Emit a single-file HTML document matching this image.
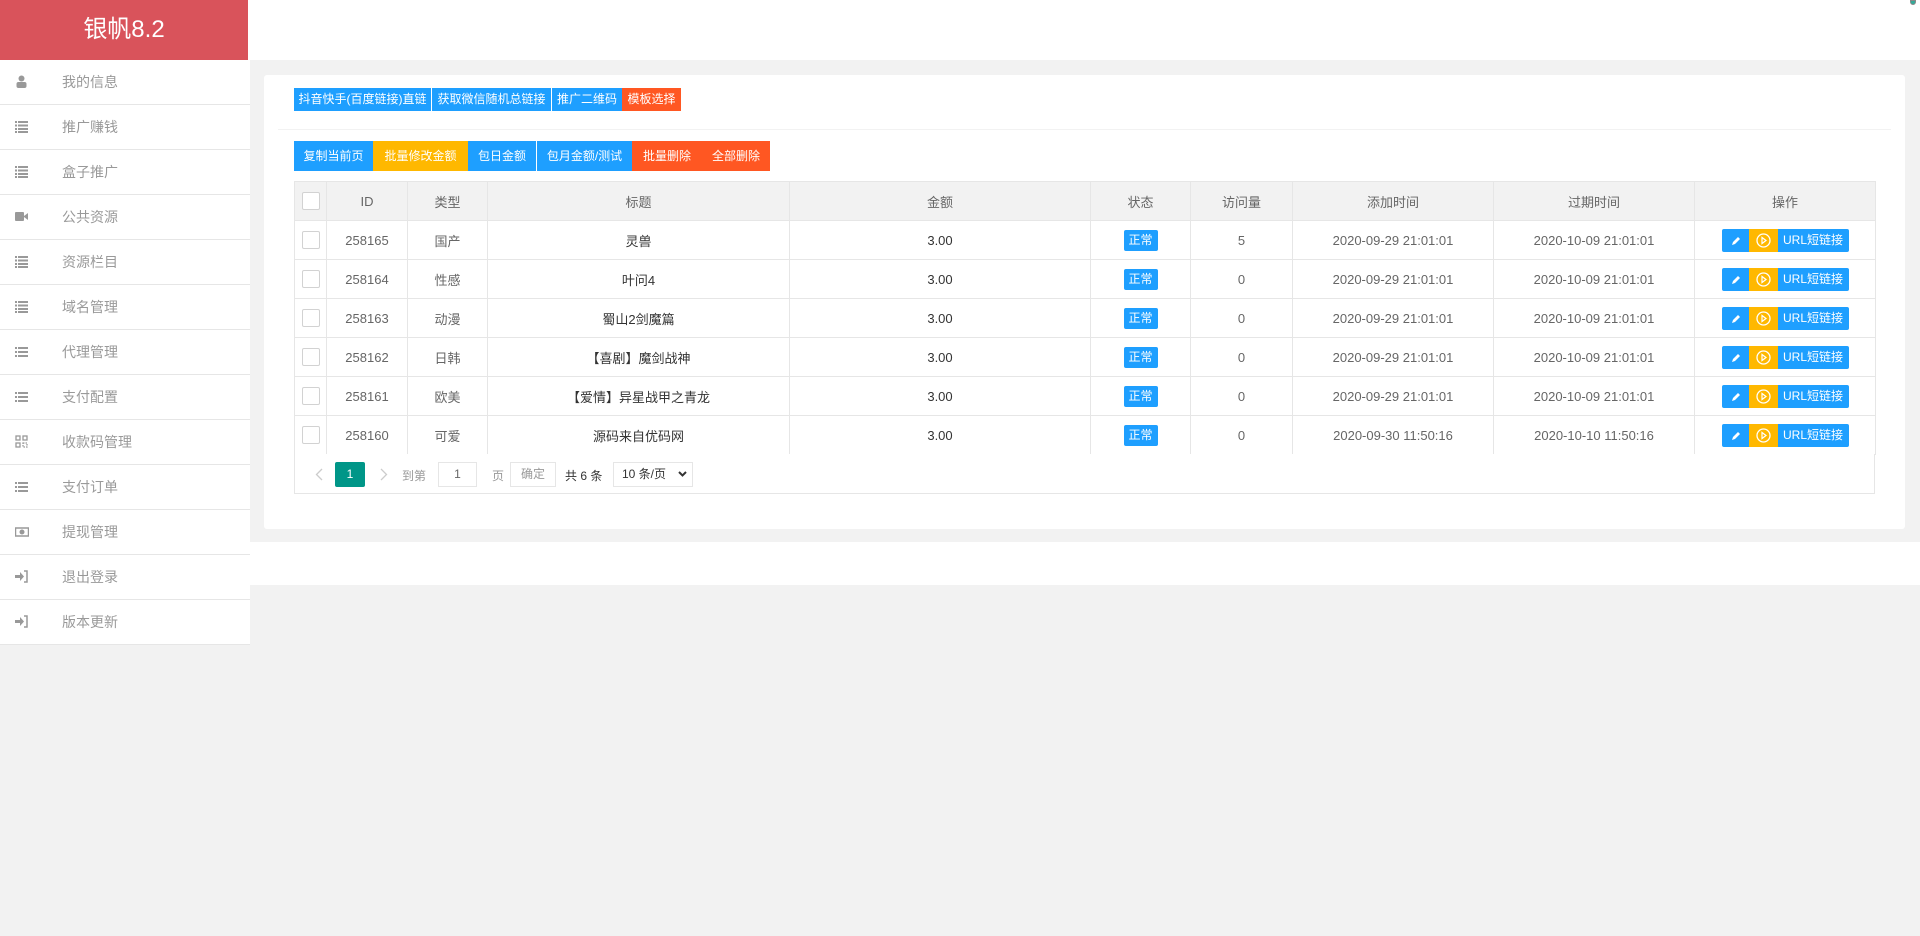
<!DOCTYPE html>
<html><head><meta charset="utf-8"><style>
*{margin:0;padding:0;box-sizing:border-box}
svg{display:block}
body{width:1920px;height:936px;background:#f2f2f2;font-family:"Liberation Sans","Noto Sans CJK SC",sans-serif;position:relative;overflow:hidden;color:#666}
.abs{position:absolute}
#logo{left:0;top:0;width:248px;height:60px;background:#d9535b;color:#fff;font-size:24px;line-height:60px;text-align:center}
#top{left:248px;top:0;width:1672px;height:60px;background:#fff}
#side{left:0;top:60px;width:250px}
.si{height:45px;border-bottom:1px solid #e6e6e6;background:#fff;position:relative;font-size:14px;color:#999;line-height:44px;padding-left:62px}
.si i{position:absolute;left:15px;top:15px;width:14px;height:13px;display:block}
#card{left:264px;top:75px;width:1641px;height:454px;background:#fff;border-radius:3px}
#foot{left:250px;top:542px;width:1670px;height:43px;background:#fff}
.btn{position:absolute;color:#fff;text-align:center;white-space:nowrap}
.r1{top:88px;height:23px;line-height:23px;font-size:12px}
.r2{top:141px;height:30px;line-height:30px;font-size:12px}
.b{background:#1E9FFF}.o{background:#FFB800}.rd{background:#FF5722}
#sep{left:278px;top:129px;width:1613px;height:1px;background:#f2f2f2}
table{position:absolute;left:294px;top:181px;width:1581px;border-collapse:collapse;font-size:13px;table-layout:fixed}
td,th{border:1px solid #e6e6e6;height:39px;text-align:center;font-weight:normal;color:#666;padding:0}
th{background:#f2f2f2}
td.t{color:#333}
.cb{display:inline-block;width:18px;height:18px;border:1px solid #d2d2d2;border-radius:2px;background:#fff;vertical-align:middle}
.st{display:inline-block;background:#1E9FFF;color:#fff;font-size:12px;width:34px;height:21px;line-height:21px;border-radius:2px;vertical-align:middle}
.ops{display:inline-flex;height:23px;vertical-align:middle;border-radius:2px;overflow:hidden}
.ops span{display:block;height:23px;line-height:23px;color:#fff;font-size:12px}
#pg{left:294px;top:454px;width:1581px;height:40px;border:1px solid #e6e6e6;border-top:none;background:#fff;font-size:12px}
</style></head><body>
<div id="logo" class="abs">银帆8.2</div>
<div id="top" class="abs"></div>
<div class="abs" style="left:1910px;top:0;width:6px;height:5px;background:#3a9;border-radius:0 0 3px 3px;border:1px solid #888"></div>
<div id="side" class="abs">
<div class="si"><i><svg width="13" height="13"><circle cx="6.5" cy="3.5" r="3" fill="#999"/><rect x="1.5" y="7" width="10" height="6" rx="2" fill="#999"/></svg></i>我的信息</div>
<div class="si"><i><svg width="13" height="13" fill="#999"><rect x="0" y="1" width="2" height="2"/><rect x="3" y="1" width="10" height="2"/><rect x="0" y="4.5" width="2" height="2"/><rect x="3" y="4.5" width="10" height="2"/><rect x="0" y="8" width="2" height="2"/><rect x="3" y="8" width="10" height="2"/><rect x="0" y="11" width="2" height="2"/><rect x="3" y="11" width="10" height="2"/></svg></i>推广赚钱</div>
<div class="si"><i><svg width="13" height="13" fill="#999"><rect x="0" y="1" width="2" height="2"/><rect x="3" y="1" width="10" height="2"/><rect x="0" y="4.5" width="2" height="2"/><rect x="3" y="4.5" width="10" height="2"/><rect x="0" y="8" width="2" height="2"/><rect x="3" y="8" width="10" height="2"/><rect x="0" y="11" width="2" height="2"/><rect x="3" y="11" width="10" height="2"/></svg></i>盒子推广</div>
<div class="si"><i><svg width="13" height="13" fill="#999"><rect x="0" y="2" width="9" height="9" rx="1"/><path d="M9 6l4-3v7l-4-3z"/></svg></i>公共资源</div>
<div class="si"><i><svg width="13" height="13" fill="#999"><rect x="0" y="1" width="2" height="2"/><rect x="3" y="1" width="10" height="2"/><rect x="0" y="4.5" width="2" height="2"/><rect x="3" y="4.5" width="10" height="2"/><rect x="0" y="8" width="2" height="2"/><rect x="3" y="8" width="10" height="2"/><rect x="0" y="11" width="2" height="2"/><rect x="3" y="11" width="10" height="2"/></svg></i>资源栏目</div>
<div class="si"><i><svg width="13" height="13" fill="#999"><rect x="0" y="1" width="2" height="2"/><rect x="3" y="1" width="10" height="2"/><rect x="0" y="4.5" width="2" height="2"/><rect x="3" y="4.5" width="10" height="2"/><rect x="0" y="8" width="2" height="2"/><rect x="3" y="8" width="10" height="2"/><rect x="0" y="11" width="2" height="2"/><rect x="3" y="11" width="10" height="2"/></svg></i>域名管理</div>
<div class="si"><i><svg width="13" height="13" fill="#999"><rect x="0" y="2" width="2" height="2"/><rect x="3" y="2" width="10" height="2"/><rect x="0" y="6" width="2" height="2"/><rect x="3" y="6" width="10" height="2"/><rect x="0" y="10" width="2" height="2"/><rect x="3" y="10" width="10" height="2"/></svg></i>代理管理</div>
<div class="si"><i><svg width="13" height="13" fill="#999"><rect x="0" y="2" width="2" height="2"/><rect x="3" y="2" width="10" height="2"/><rect x="0" y="6" width="2" height="2"/><rect x="3" y="6" width="10" height="2"/><rect x="0" y="10" width="2" height="2"/><rect x="3" y="10" width="10" height="2"/></svg></i>支付配置</div>
<div class="si"><i><svg width="13" height="13" fill="none" stroke="#999" stroke-width="1.3"><rect x="1" y="1" width="4" height="4"/><rect x="8" y="1" width="4" height="4"/><rect x="1" y="8" width="4" height="4"/><path d="M8 8h4v4h-4z" stroke-dasharray="1.5 1"/></svg></i>收款码管理</div>
<div class="si"><i><svg width="13" height="13" fill="#999"><rect x="0" y="2" width="2" height="2"/><rect x="3" y="2" width="10" height="2"/><rect x="0" y="6" width="2" height="2"/><rect x="3" y="6" width="10" height="2"/><rect x="0" y="10" width="2" height="2"/><rect x="3" y="10" width="10" height="2"/></svg></i>支付订单</div>
<div class="si"><i><svg width="14" height="13"><rect x="0.5" y="3" width="13" height="8" fill="none" stroke="#999" stroke-width="1.5"/><circle cx="7" cy="7" r="2.5" fill="#999"/></svg></i>提现管理</div>
<div class="si"><i><svg width="13" height="13" fill="#999"><path d="M0 5h5V2l4 4.5-4 4.5V8H0z"/><path d="M9 1h3v11H9" fill="none" stroke="#999" stroke-width="1.5"/></svg></i>退出登录</div>
<div class="si"><i><svg width="13" height="13" fill="#999"><path d="M0 5h5V2l4 4.5-4 4.5V8H0z"/><path d="M9 1h3v11H9" fill="none" stroke="#999" stroke-width="1.5"/></svg></i>版本更新</div>
</div>
<div id="card" class="abs"></div>
<div id="foot" class="abs"></div>
<div class="btn r1 b" style="left:294px;width:137px">抖音快手(百度链接)直链</div>
<div class="btn r1 b" style="left:432px;width:119px">获取微信随机总链接</div>
<div class="btn r1 b" style="left:552px;width:70px">推广二维码</div>
<div class="btn r1 rd" style="left:622px;width:59px">模板选择</div>
<div id="sep" class="abs"></div>
<div class="btn r2 b" style="left:294px;width:79px">复制当前页</div>
<div class="btn r2 o" style="left:373px;width:95px">批量修改金额</div>
<div class="btn r2 b" style="left:468px;width:68px">包日金额</div>
<div class="btn r2 b" style="left:537px;width:95px">包月金额/测试</div>
<div class="btn r2 rd" style="left:632px;width:70px">批量删除</div>
<div class="btn r2 rd" style="left:702px;width:68px">全部删除</div>
<table>
<colgroup><col style="width:32px"><col style="width:81px"><col style="width:80px"><col style="width:302px"><col style="width:301px"><col style="width:100px"><col style="width:102px"><col style="width:201px"><col style="width:201px"><col style="width:181px"></colgroup>
<tr><th><span class="cb"></span></th><th>ID</th><th>类型</th><th>标题</th><th>金额</th><th>状态</th><th>访问量</th><th>添加时间</th><th>过期时间</th><th>操作</th></tr>
<tr><td><span class="cb"></span></td><td>258165</td><td>国产</td><td class="t">灵兽</td><td class="t">3.00</td><td><span class="st">正常</span></td><td>5</td><td>2020-09-29 21:01:01</td><td>2020-10-09 21:01:01</td><td><span class="ops"><span class="b" style="width:27px"><svg width="27" height="23"><path d="M10 16l1-3 5-5 2 2-5 5z" fill="#fff"/></svg></span><span class="o" style="width:29px"><svg width="29" height="23"><circle cx="14.5" cy="11.5" r="6.5" fill="none" stroke="#fff" stroke-width="1.3"/><path d="M13 8.5v6l4-3z" fill="none" stroke="#fff" stroke-width="1.2"/></svg></span><span class="b" style="width:71px">URL短链接</span></span></td></tr>
<tr><td><span class="cb"></span></td><td>258164</td><td>性感</td><td class="t">叶问4</td><td class="t">3.00</td><td><span class="st">正常</span></td><td>0</td><td>2020-09-29 21:01:01</td><td>2020-10-09 21:01:01</td><td><span class="ops"><span class="b" style="width:27px"><svg width="27" height="23"><path d="M10 16l1-3 5-5 2 2-5 5z" fill="#fff"/></svg></span><span class="o" style="width:29px"><svg width="29" height="23"><circle cx="14.5" cy="11.5" r="6.5" fill="none" stroke="#fff" stroke-width="1.3"/><path d="M13 8.5v6l4-3z" fill="none" stroke="#fff" stroke-width="1.2"/></svg></span><span class="b" style="width:71px">URL短链接</span></span></td></tr>
<tr><td><span class="cb"></span></td><td>258163</td><td>动漫</td><td class="t">蜀山2剑魔篇</td><td class="t">3.00</td><td><span class="st">正常</span></td><td>0</td><td>2020-09-29 21:01:01</td><td>2020-10-09 21:01:01</td><td><span class="ops"><span class="b" style="width:27px"><svg width="27" height="23"><path d="M10 16l1-3 5-5 2 2-5 5z" fill="#fff"/></svg></span><span class="o" style="width:29px"><svg width="29" height="23"><circle cx="14.5" cy="11.5" r="6.5" fill="none" stroke="#fff" stroke-width="1.3"/><path d="M13 8.5v6l4-3z" fill="none" stroke="#fff" stroke-width="1.2"/></svg></span><span class="b" style="width:71px">URL短链接</span></span></td></tr>
<tr><td><span class="cb"></span></td><td>258162</td><td>日韩</td><td class="t">【喜剧】魔剑战神</td><td class="t">3.00</td><td><span class="st">正常</span></td><td>0</td><td>2020-09-29 21:01:01</td><td>2020-10-09 21:01:01</td><td><span class="ops"><span class="b" style="width:27px"><svg width="27" height="23"><path d="M10 16l1-3 5-5 2 2-5 5z" fill="#fff"/></svg></span><span class="o" style="width:29px"><svg width="29" height="23"><circle cx="14.5" cy="11.5" r="6.5" fill="none" stroke="#fff" stroke-width="1.3"/><path d="M13 8.5v6l4-3z" fill="none" stroke="#fff" stroke-width="1.2"/></svg></span><span class="b" style="width:71px">URL短链接</span></span></td></tr>
<tr><td><span class="cb"></span></td><td>258161</td><td>欧美</td><td class="t">【爱情】异星战甲之青龙</td><td class="t">3.00</td><td><span class="st">正常</span></td><td>0</td><td>2020-09-29 21:01:01</td><td>2020-10-09 21:01:01</td><td><span class="ops"><span class="b" style="width:27px"><svg width="27" height="23"><path d="M10 16l1-3 5-5 2 2-5 5z" fill="#fff"/></svg></span><span class="o" style="width:29px"><svg width="29" height="23"><circle cx="14.5" cy="11.5" r="6.5" fill="none" stroke="#fff" stroke-width="1.3"/><path d="M13 8.5v6l4-3z" fill="none" stroke="#fff" stroke-width="1.2"/></svg></span><span class="b" style="width:71px">URL短链接</span></span></td></tr>
<tr><td><span class="cb"></span></td><td>258160</td><td>可爱</td><td class="t">源码来自优码网</td><td class="t">3.00</td><td><span class="st">正常</span></td><td>0</td><td>2020-09-30 11:50:16</td><td>2020-10-10 11:50:16</td><td><span class="ops"><span class="b" style="width:27px"><svg width="27" height="23"><path d="M10 16l1-3 5-5 2 2-5 5z" fill="#fff"/></svg></span><span class="o" style="width:29px"><svg width="29" height="23"><circle cx="14.5" cy="11.5" r="6.5" fill="none" stroke="#fff" stroke-width="1.3"/><path d="M13 8.5v6l4-3z" fill="none" stroke="#fff" stroke-width="1.2"/></svg></span><span class="b" style="width:71px">URL短链接</span></span></td></tr>
</table>
<div id="pg" class="abs">
<svg class="abs" style="left:20px;top:14px" width="8" height="13"><path d="M7 1L1.5 6.5 7 12" fill="none" stroke="#ccc" stroke-width="1.3"/></svg>
<div class="abs" style="left:40px;top:8px;width:30px;height:25px;background:#009688;color:#fff;line-height:25px;text-align:center;border-radius:2px">1</div>
<svg class="abs" style="left:85px;top:14px" width="8" height="13"><path d="M1 1l5.5 5.5L1 12" fill="none" stroke="#ccc" stroke-width="1.3"/></svg>
<div class="abs" style="left:107px;top:13px;color:#999">到第</div>
<div class="abs" style="left:143px;top:8px;width:39px;height:25px;border:1px solid #e6e6e6;line-height:23px;text-align:center;color:#666">1</div>
<div class="abs" style="left:197px;top:13px;color:#999">页</div>
<div class="abs" style="left:215px;top:8px;width:46px;height:25px;border:1px solid #e6e6e6;line-height:23px;text-align:center;color:#999">确定</div>
<div class="abs" style="left:270px;top:13px;color:#333">共 6 条</div>
<div class="abs" style="left:318px;top:8px;width:80px;height:25px;border:1px solid #e6e6e6;line-height:23px;padding-left:8px;color:#333">10 条/页<svg class="abs" style="left:64px;top:8px" width="9" height="7"><path d="M1 1l3.5 3.5L8 1" fill="none" stroke="#333" stroke-width="2"/></svg></div>
</div>
</body></html>
